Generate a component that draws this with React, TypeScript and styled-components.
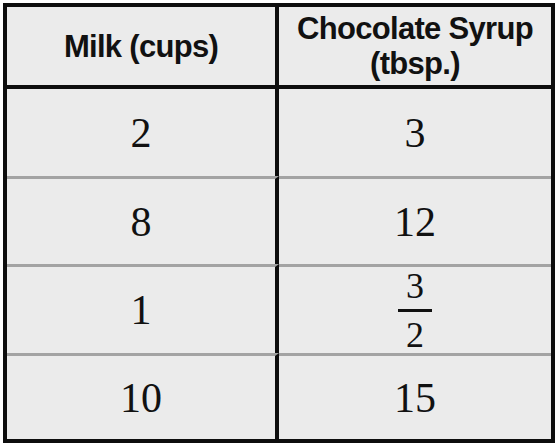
import React from "react";
import styled, { createGlobalStyle } from "styled-components";

const Global = createGlobalStyle`
  html, body { margin: 0; padding: 0; background: #ffffff; }
  #root { width: 560px; height: 448px; }
`;

const Page = styled.div`
  box-sizing: border-box;
  width: 560px;
  height: 448px;
  padding: 3px 5px 5px 3px;
`;

const Table = styled.div`
  box-sizing: border-box;
  width: 552px;
  height: 440px;
  border: 4px solid #0d0d0d;
  background: #ebebeb;
  display: grid;
  grid-template-columns: 272px 1fr;
  grid-template-rows: 82px 87px 88px 89px 86px;
`;

const Cell = styled.div<{ $left?: boolean; $head?: boolean; $first?: boolean }>`
  box-sizing: border-box;
  display: flex;
  align-items: center;
  justify-content: center;
  text-align: center;
  border-right: ${(p) => (p.$left ? "4px solid #0d0d0d" : "none")};
  border-bottom: ${(p) => (p.$head ? "4px solid #0d0d0d" : "none")};
  border-top: ${(p) => (p.$head || p.$first ? "none" : "3px solid #a3a3a3")};
`;

const HeadText = styled.span`
  font-family: "Liberation Sans", Arial, sans-serif;
  font-weight: 700;
  font-size: 31px;
  line-height: 35px;
  letter-spacing: -0.7px;
  color: #111111;
`;

const Num = styled.span`
  font-family: "Liberation Serif", "Times New Roman", serif;
  font-size: 42px;
  line-height: 1;
  color: #111111;
`;

const Frac = styled.span`
  display: inline-flex;
  flex-direction: column;
  align-items: center;
  font-family: "Liberation Serif", "Times New Roman", serif;
  font-size: 36px;
  line-height: 1;
  color: #111111;
`;

const FracPart = styled.span`
  display: block;
  padding: 0 8px;
`;

const FracBar = styled.span`
  display: block;
  align-self: stretch;
  height: 3px;
  background: #111111;
  margin: 5px 0 5px;
`;

const rows: [React.ReactNode, React.ReactNode][] = [
  ["2", "3"],
  ["8", "12"],
  ["1", "frac"],
  ["10", "15"],
];

export default function App() {
  return (
    <>
      <Global />
      <Page>
        <Table>
          <Cell $left $head>
            <HeadText>Milk (cups)</HeadText>
          </Cell>
          <Cell $head>
            <HeadText>
              Chocolate Syrup
              <br />
              (tbsp.)
            </HeadText>
          </Cell>
          {rows.map(([a, b], i) => (
            <React.Fragment key={i}>
              <Cell $left $first={i === 0}>
                <Num>{a}</Num>
              </Cell>
              <Cell $first={i === 0}>
                {b === "frac" ? (
                  <Frac>
                    <FracPart>3</FracPart>
                    <FracBar />
                    <FracPart>2</FracPart>
                  </Frac>
                ) : (
                  <Num>{b}</Num>
                )}
              </Cell>
            </React.Fragment>
          ))}
        </Table>
      </Page>
    </>
  );
}
